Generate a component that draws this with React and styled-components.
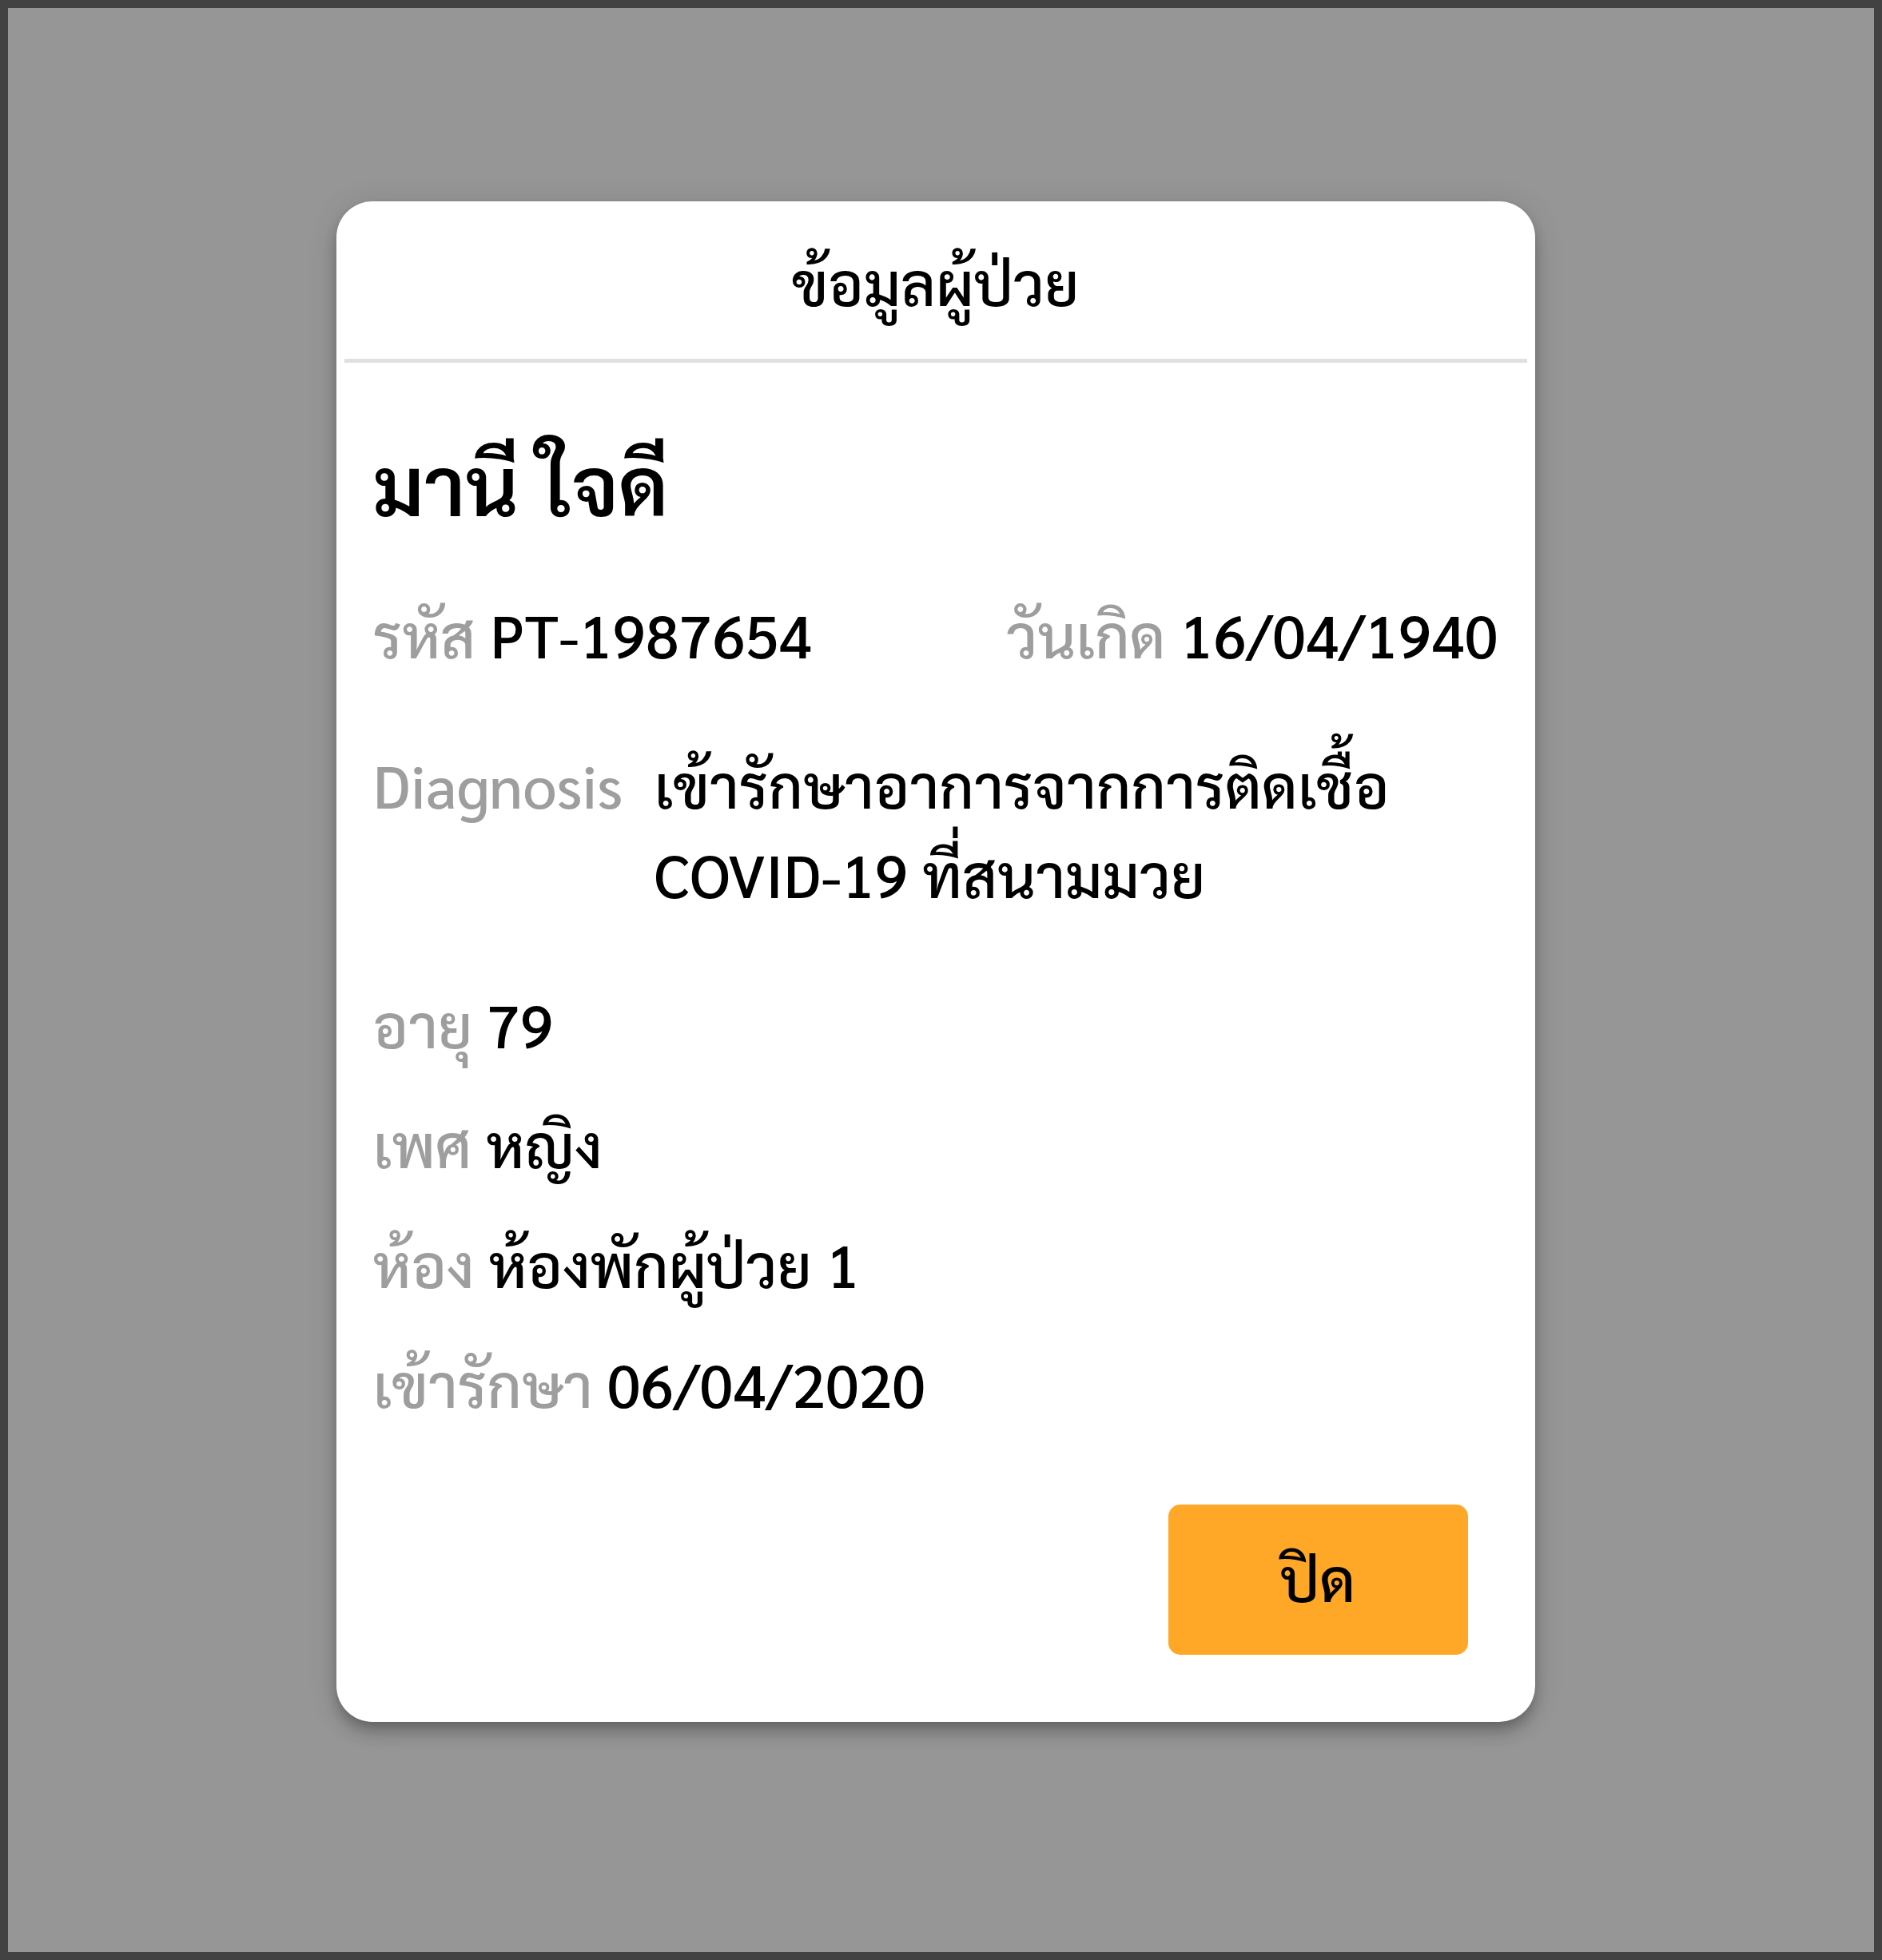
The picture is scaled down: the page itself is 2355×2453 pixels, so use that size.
import React from "react";
import styled, { createGlobalStyle } from "styled-components";

const GlobalStyle = createGlobalStyle`
  *, *::before, *::after { box-sizing: border-box; }
  body {
    margin: 0;
    font-family: "Sarabun", "Noto Sans Thai Looped", "Noto Sans", sans-serif;
    color: #000;
  }
`;

const Backdrop = styled.main`
  display: flex;
  align-items: flex-start;
  justify-content: center;
  min-height: 100vh;
  padding: 242px 14px 60px 0;
  border: 10px solid #424242;
  background: #969696;
`;

const Card = styled.section`
  width: 100%;
  max-width: 1500px;
  border-radius: 45px;
  background: #fff;
  box-shadow:
    0 8px 15px -4px rgba(0, 0, 0, 0.2),
    0 15px 19px rgba(0, 0, 0, 0.14),
    0 4px 38px rgba(0, 0, 0, 0.12);
`;

const CardHeader = styled.header`
  margin: 0 10px;
  padding: 44px 0 41px;
  border-bottom: 5px solid #e0e0e0;
  text-align: center;
`;

const CardTitle = styled.h1`
  margin: 0;
  font-size: 75px;
  font-weight: 500;
  line-height: 112px;
`;

const CardBody = styled.div`
  padding: 74px 46px 0;
`;

const PatientName = styled.h2`
  margin: 0 0 59px;
  font-size: 103px;
  font-weight: 600;
  line-height: 150px;
`;

const Details = styled.dl`
  display: flex;
  flex-direction: column;
  gap: 76px;
  margin: 0;
  font-size: 75px;
  font-weight: 500;
  line-height: 112px;
`;

const SplitRow = styled.div`
  display: flex;
  flex-wrap: wrap;
  justify-content: space-between;
`;

const Stack = styled.div`
  display: flex;
  flex-direction: column;
  gap: 38px;
`;

const Field = styled.div`
  display: ${({ $columns }) => ($columns ? "grid" : "flex")};
  grid-template-columns: 1fr 3fr;
  gap: ${({ $columns }) => ($columns ? "0" : "18px")};
`;

const Label = styled.dt`
  color: #9e9e9e;
`;

const Value = styled.dd`
  margin: 0;
`;

const CardFooter = styled.footer`
  display: flex;
  justify-content: flex-end;
  padding: 96px 84px 84px;
`;

const CloseButton = styled.button`
  min-width: 375px;
  height: 188px;
  padding: 0 45px 6px;
  border: 0;
  border-radius: 15px;
  background: #ffa726;
  color: #000;
  font: inherit;
  font-size: 75px;
  font-weight: 500;
  line-height: 112px;
  cursor: pointer;
`;

const InfoField = ({ label, children, columns }) => (
  <Field $columns={columns}>
    <Label>{label}</Label>
    <Value>{children}</Value>
  </Field>
);

export default function App() {
  return (
    <>
      <GlobalStyle />
      <Backdrop>
        <Card role="dialog" aria-labelledby="patient-title" lang="th">
          <CardHeader>
            <CardTitle id="patient-title">ข้อมูลผู้ป่วย</CardTitle>
          </CardHeader>
          <CardBody>
            <PatientName>มานี ใจดี</PatientName>
            <Details>
              <SplitRow>
                <InfoField label="รหัส">PT-1987654</InfoField>
                <InfoField label="วันเกิด">16/04/1940</InfoField>
              </SplitRow>
              <InfoField label="Diagnosis" columns>
                เข้ารักษาอาการจากการติดเชื้อ COVID-19 ที่สนามมวย
              </InfoField>
              <Stack>
                <InfoField label="อายุ">79</InfoField>
                <InfoField label="เพศ">หญิง</InfoField>
                <InfoField label="ห้อง">ห้องพักผู้ป่วย 1</InfoField>
                <InfoField label="เข้ารักษา">06/04/2020</InfoField>
              </Stack>
            </Details>
          </CardBody>
          <CardFooter>
            <CloseButton type="button">ปิด</CloseButton>
          </CardFooter>
        </Card>
      </Backdrop>
    </>
  );
}
